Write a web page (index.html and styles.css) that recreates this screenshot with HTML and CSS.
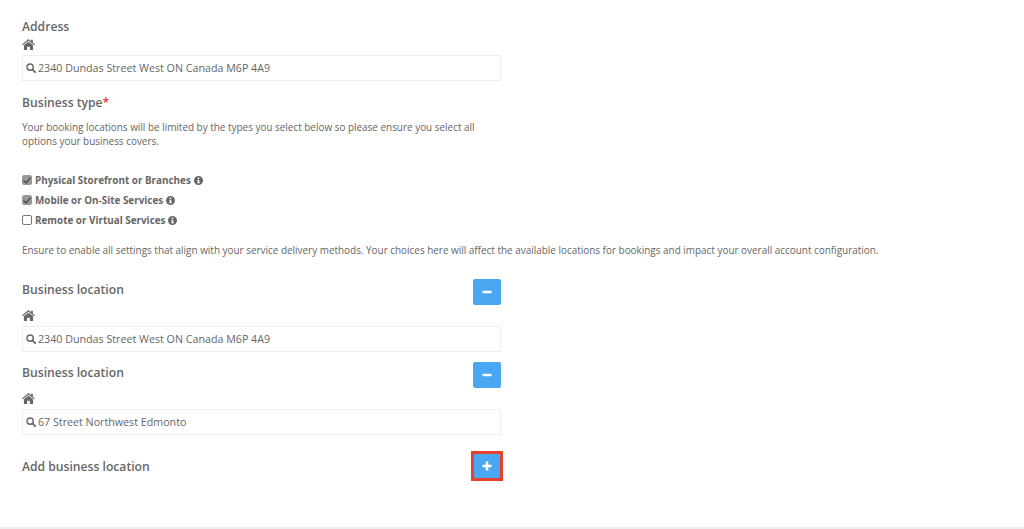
FILE: index.html
```html
<!DOCTYPE html>
<html lang="en">
<head>
  <meta charset="UTF-8">
  <title>Business details</title>
  <link rel="stylesheet" href="styles.css">
</head>
<body>

<svg class="icon-defs" width="0" height="0">
  <symbol id="home" viewBox="0 0 24 20">
    <path d="M12 0 L16.5 3.8 V1.2 H20 V6.7 L24 10 L22.6 11.6 L12 2.9 L1.4 11.6 L0 10 Z"/>
    <path d="M12 4.7 L20.5 11.6 V19 A1 1 0 0 1 19.5 20 H14.5 V14 H9.5 V20 H4.5 A1 1 0 0 1 3.5 19 V11.6 Z"/>
  </symbol>
  <symbol id="search" viewBox="0 0 16 16">
    <circle cx="6.6" cy="6.6" r="5" fill="none" stroke="currentColor" stroke-width="2.2"/>
    <path d="M10.2 10.2 L14.6 14.6" stroke="currentColor" stroke-width="2.8" stroke-linecap="round"/>
  </symbol>
  <symbol id="info" viewBox="0 0 16 16">
    <path fill-rule="evenodd" d="M8 0 A8 8 0 1 1 8 16 A8 8 0 1 1 8 0 Z M6.7 2.8 V5.2 H9.3 V2.8 Z M5.6 6.6 V8.2 H6.7 V11.2 H5.6 V12.8 H10.4 V11.2 H9.3 V6.6 Z"/>
  </symbol>
  <symbol id="minus" viewBox="0 0 10 10">
    <rect x="0.5" y="3.7" width="9" height="2.6" rx="0.6"/>
  </symbol>
  <symbol id="plus" viewBox="0 0 10 10">
    <path d="M3.7 0.5 H6.3 V3.7 H9.5 V6.3 H6.3 V9.5 H3.7 V6.3 H0.5 V3.7 H3.7 Z"/>
  </symbol>
</svg>

<div class="form-container">

  <!-- Address -->
  <div class="address-block">
    <label class="field-label">Address</label>
    <svg class="home-icon"><use href="#home"/></svg>
    <div class="search-input">
      <svg class="search-icon"><use href="#search"/></svg>
      <span>2340 Dundas Street West ON Canada M6P 4A9</span>
    </div>
  </div>

  <!-- Business type -->
  <h3 class="section-title">Business type<span class="required">*</span></h3>
  <p class="help-text narrow">Your booking locations will be limited by the types you select below so please ensure you select all options your business covers.</p>

  <div class="check-list">
    <label class="check-row">
      <input type="checkbox" checked>
      <span>Physical Storefront or Branches</span>
      <svg class="info-icon"><use href="#info"/></svg>
    </label>
    <label class="check-row">
      <input type="checkbox" checked>
      <span>Mobile or On-Site Services</span>
      <svg class="info-icon"><use href="#info"/></svg>
    </label>
    <label class="check-row">
      <input type="checkbox">
      <span>Remote or Virtual Services</span>
      <svg class="info-icon"><use href="#info"/></svg>
    </label>
  </div>

  <p class="help-text note">Ensure to enable all settings that align with your service delivery methods. Your choices here will affect the available locations for bookings and impact your overall account configuration.</p>

  <!-- Business locations -->
  <div class="location first">
    <div class="location-head">
      <h3 class="section-title">Business location</h3>
      <button class="square-btn"><svg class="btn-icon"><use href="#minus"/></svg></button>
    </div>
    <svg class="home-icon"><use href="#home"/></svg>
    <div class="search-input">
      <svg class="search-icon"><use href="#search"/></svg>
      <span>2340 Dundas Street West ON Canada M6P 4A9</span>
    </div>
  </div>

  <div class="location">
    <div class="location-head">
      <h3 class="section-title">Business location</h3>
      <button class="square-btn"><svg class="btn-icon"><use href="#minus"/></svg></button>
    </div>
    <svg class="home-icon"><use href="#home"/></svg>
    <div class="search-input">
      <svg class="search-icon"><use href="#search"/></svg>
      <span>67 Street Northwest Edmonto</span>
    </div>
  </div>

  <div class="add-row">
    <h3 class="section-title">Add business location</h3>
    <button class="square-btn highlighted"><svg class="btn-icon"><use href="#plus"/></svg></button>
  </div>

</div>

<div class="page-footer"></div>

</body>
</html>
```

FILE: styles.css
```css
html, body {
  height: 100%;
}

body {
  margin: 0;
  background-color: #fff;
  font-family: 'Open Sans', sans-serif;
  color: #666;
  overflow: hidden;
  position: relative;
}

.icon-defs {
  display: block;
  height: 0;
}

.form-container {
  width: 479px;
  padding: 18px 0 0 22px;
}

.field-label {
  display: block;
  font-size: 12.15px;
  line-height: 18px;
  font-weight: 600;
}

.section-title {
  margin: 0;
  font-size: 12.15px;
  line-height: 18px;
  font-weight: 600;
}

.required {
  color: #e8302a;
}

.home-icon {
  display: block;
  width: 13px;
  height: 11px;
  margin-top: 3px;
  fill: #666;
}

.search-input {
  display: flex;
  align-items: center;
  gap: 2px;
  box-sizing: border-box;
  height: 26px;
  margin-top: 5px;
  padding-left: 3px;
  border: 1px solid #eee;
  font-size: 10.7px;
  color: #666;
}

.search-icon {
  width: 10px;
  height: 10px;
  color: #666;
  fill: #666;
}

.address-block + .section-title {
  margin-top: 13px;
}

.help-text {
  margin: 0;
  font-size: 9.93px;
  line-height: 14px;
}

.narrow {
  margin-top: 8px;
}

.check-list {
  margin-top: 22px;
}

.check-row {
  display: flex;
  align-items: center;
  height: 20px;
  font-size: 9.9px;
  font-weight: 700;
}

.check-row input {
  appearance: none;
  position: relative;
  box-sizing: border-box;
  width: 10px;
  height: 10px;
  margin: 0 3px 0 0;
  border: 1px solid #777;
  border-radius: 2px;
  background-color: #fff;
}

.check-row input:checked {
  border-color: #999;
  background-color: #999;
}

.check-row input:checked::after {
  content: "";
  position: absolute;
  left: 2px;
  top: 0;
  width: 3px;
  height: 6px;
  border: solid #333;
  border-width: 0 1.5px 1.5px 0;
  transform: rotate(40deg);
}

.info-icon {
  width: 9px;
  height: 9px;
  margin-left: 3px;
  fill: #666;
}

.note {
  width: 900px;
  margin-top: 13px;
}

.location-head {
  display: flex;
  justify-content: space-between;
  align-items: flex-start;
  height: 26px;
}

.location-head .section-title {
  padding-top: 2px;
}

.location.first {
  margin-top: 21.5px;
}

.location {
  margin-top: 10px;
}

.location .home-icon {
  margin-top: 5px;
}

.location .search-input {
  margin-top: 5px;
}

.square-btn {
  display: flex;
  align-items: center;
  justify-content: center;
  width: 28px;
  height: 26px;
  padding: 0;
  border: none;
  border-radius: 2px;
  background-color: #4aa8f2;
}

.btn-icon {
  width: 10px;
  height: 10px;
  fill: #fff;
}

.add-row {
  display: flex;
  justify-content: space-between;
  align-items: center;
  height: 24px;
  margin-top: 19px;
}

.add-row .section-title {
  padding-top: 2px;
}

.highlighted {
  width: 26px;
  height: 24px;
  margin-right: 1px;
  outline: 3px solid #e8402c;
  border-radius: 0;
}

.page-footer {
  position: absolute;
  left: 0;
  right: 0;
  bottom: 0;
  height: 2px;
  background-color: #eee;
}
```
